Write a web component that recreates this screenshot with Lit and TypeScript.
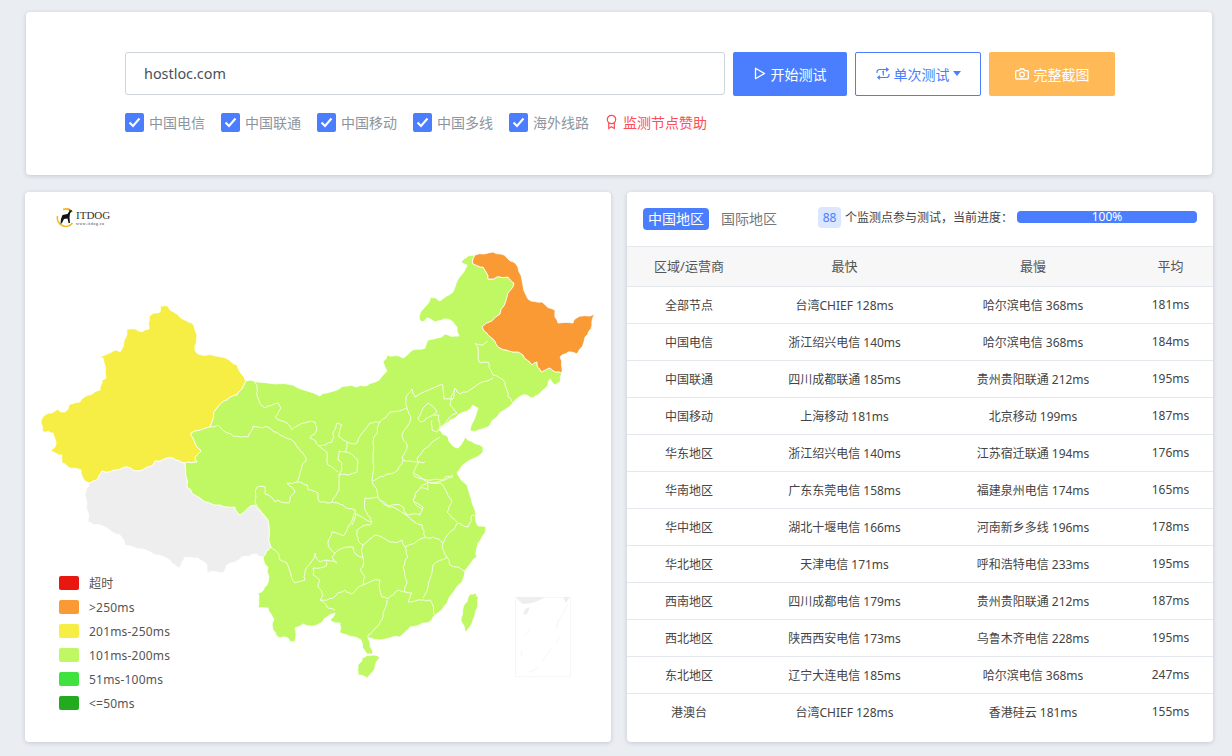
import { LitElement, html, css, svg } from 'lit';
import { customElement, state } from 'lit/decorators.js';

// Map shapes use page coordinates, the svg viewBox lines them up with the card.
const XINJIANG = '160,306 168,306 170,310 185,320 192,323 197,335 195,350 198,354 222,357 237,365 246,381 243,387 237,395 227,400 217,408 210,427 191,433 195,443 201,451 195,457 197,462 185,463 173,458 155,461 152,466 137,471 125,467 118,470 102,471 97,480 89,483 83,478 81,470 68,467 62,463 62,455 50,450 55,447 53,433 43,432 41,423 45,415 58,409 61,412 65,412 70,404 80,402 83,398 100,390 102,380 106,378 103,358 99,357 115,350 120,352 127,329 142,332 149,329 149,317 160,312';
const TIBET = '89,483 97,480 102,471 118,470 125,467 137,471 152,466 155,461 173,458 185,463 187,487 200,498 220,505 235,507 240,515 255,505 268,520 271,547 263,557 255,554 242,557 227,565 223,573 208,573 207,565 198,558 185,557 180,568 170,560 150,552 125,545 120,535 100,525 88,522 85,495';
const HEILONGJIANG = '475,255 493,252 507,258 515,263 522,280 528,299 542,302 555,310 558,323 573,323 575,319 595,314 592,325 585,337 577,354 568,352 560,357 562,373 550,368 541,372 537,362 532,365 523,355 513,352 500,348 493,339 488,335 482,327 500,314 507,297 514,283 508,277 488,279 483,267 473,264';
const MAINLAND = '246,381 257,382 293,385 320,396 330,392 347,386 365,386 375,382 387,371 383,362 387,355 403,358 410,352 425,348 428,340 445,334 459,336 457,327 447,319 435,322 427,318 422,322 419,318 431,297 440,301 453,292 463,273 467,265 461,262 468,256 475,255 473,264 483,267 488,279 508,277 514,283 507,297 500,314 482,327 488,335 493,339 500,348 513,352 523,355 532,365 537,362 541,372 550,368 562,373 560,382 555,385 550,379 543,390 533,398 523,395 513,403 497,417 488,427 470,431 478,408 473,405 458,415 443,425 439,430 448,437 452,445 458,448 465,437 468,440 483,447 483,452 470,460 457,473 467,485 475,510 478,526 486,527 485,533 478,543 477,557 467,568 462,582 447,603 435,615 427,623 410,627 400,637 380,640 368,638 373,654 367,654 361,640 340,633 340,623 330,620 335,613 327,617 317,625 303,624 295,628 295,642 290,642 288,638 280,638 273,630 274,620 268,608 258,608 258,593 267,585 268,567 263,557 271,547 268,520 255,505 240,515 235,507 220,505 200,498 187,487 185,463 197,462 195,457 201,451 195,443 191,433 210,427 217,408 227,400 237,395 243,387';
const HAINAN = '380,657 372,655 362,658 358,665 358,675 367,678 375,668';
const TAIWAN = '476,593 470,594 463,608 461,621 466,633 473,620 478,603';

const BORDERS = [
  '255,382 258,398 265,408 278,403 281,408 275,417 287,423 292,430 297,426 315,422 317,428 310,438 319,446 332,442 333,432 337,423 342,425 339,437 347,442 357,443 370,423 380,422 390,412 407,408 406,397 412,389 415,397 442,384 444,399 453,399 455,388 460,394 473,388 493,378',
  '493,375 492,373 488,362 480,363 478,348 475,343 483,345 488,341',
  '493,375 500,378 505,383 508,397 513,403',
  '455,388 450,405 457,413 440,428',
  '418,418 423,408 428,403 437,412 433,415 425,420 421,422 418,418',
  '433,415 439,415 440,427 437,432 432,430 432,420',
  '407,408 411,418 402,435 407,445 402,457 403,460 417,462 425,462',
  '440,437 432,442 417,458 418,464 413,473 428,482 438,482 453,477',
  '403,460 398,470 387,474 373,481',
  '380,422 373,443 373,462 372,480 378,497 365,498 367,513 372,522 370,525 357,530 358,540 363,545',
  '378,497 385,505 403,507 407,515 420,515 423,507 413,500 420,488 428,490 428,482',
  '347,442 345,452 357,459 357,472 348,475 339,475 342,463 338,460 339,451 345,452',
  '339,475 339,490 332,502 343,505 355,510 355,518 352,525',
  '319,446 327,453 328,465 338,472',
  '210,427 218,425 228,433 240,437 248,437 253,426 262,428 268,427 280,435 295,443 303,453 306,461 300,472 297,482 287,483 295,492 290,497 289,503 278,500 275,502 265,494 265,487 257,487 255,502 268,520',
  '297,482 307,485 308,490 318,493 320,502 328,503 332,502',
  '271,547 275,550 280,560 287,563 295,583 305,580 307,567 315,553 320,562 327,560 327,565 313,568 313,575 320,580 318,587 323,595 320,600 327,607 335,610',
  '327,560 337,563 332,557 335,553 347,547 353,547 357,555 363,557',
  '335,553 328,543 332,532 343,536 353,518 355,513 372,522',
  '363,545 375,535 390,542 402,540 405,547 423,538 433,537 443,543',
  '425,537 422,525 403,513 388,507 380,500',
  '363,545 363,567 360,570 365,577 363,585 380,580 382,597 388,599 398,590 405,592 412,593 408,602 422,600 430,600 434,615',
  '405,547 408,557 403,567 407,582 405,592',
  '320,600 333,598 345,590 352,594 363,585',
  '387,600 383,617 377,627 368,635 368,638',
  '423,598 433,565 447,557 443,543',
  '447,557 450,565 457,567 465,571',
  '443,543 457,523 468,527 472,515 477,517',
  '457,522 447,512 452,502 447,493 440,483 428,482 420,488 413,500 423,510',
  '413,475 427,480 443,480 453,475',
];

const LEGEND = [
  ['#e81710', '超时'],
  ['#f99a35', '>250ms'],
  ['#f7ee45', '201ms-250ms'],
  ['#c0f864', '101ms-200ms'],
  ['#40e240', '51ms-100ms'],
  ['#22ab1e', '<=50ms'],
];

const ROWS = [
  ['全部节点', '台湾CHIEF 128ms', '哈尔滨电信 368ms', '181ms'],
  ['中国电信', '浙江绍兴电信 140ms', '哈尔滨电信 368ms', '184ms'],
  ['中国联通', '四川成都联通 185ms', '贵州贵阳联通 212ms', '195ms'],
  ['中国移动', '上海移动 181ms', '北京移动 199ms', '187ms'],
  ['华东地区', '浙江绍兴电信 140ms', '江苏宿迁联通 194ms', '176ms'],
  ['华南地区', '广东东莞电信 158ms', '福建泉州电信 174ms', '165ms'],
  ['华中地区', '湖北十堰电信 166ms', '河南新乡多线 196ms', '178ms'],
  ['华北地区', '天津电信 171ms', '呼和浩特电信 233ms', '195ms'],
  ['西南地区', '四川成都电信 179ms', '贵州贵阳联通 212ms', '187ms'],
  ['西北地区', '陕西西安电信 173ms', '乌鲁木齐电信 228ms', '195ms'],
  ['东北地区', '辽宁大连电信 185ms', '哈尔滨电信 368ms', '247ms'],
  ['港澳台', '台湾CHIEF 128ms', '香港硅云 181ms', '155ms'],
];

const LINES = ['中国电信', '中国联通', '中国移动', '中国多线', '海外线路'];

type Pt = [number, number];

// Roughens a segment so the borders look hand drawn. The offset only depends on the
// two end points, so an edge shared by two shapes stays shared.
function rough(a: Pt, b: Pt, depth: number): Pt[] {
  const len = Math.hypot(b[0] - a[0], b[1] - a[1]);
  if (depth === 0 || len < 4) return [b];
  const swap = a[0] > b[0] || (a[0] === b[0] && a[1] > b[1]);
  const [p, q] = swap ? [b, a] : [a, b];
  const seed = Math.sin(p[0] * 12.9898 + p[1] * 78.233 + q[0] * 37.719 + q[1] * 9.151) * 43758.5453;
  const amount = ((seed - Math.floor(seed)) * 2 - 1) * Math.min(1.7, len * 0.14);
  const mid: Pt = [
    (p[0] + q[0]) / 2 - ((q[1] - p[1]) / len) * amount,
    (p[1] + q[1]) / 2 + ((q[0] - p[0]) / len) * amount,
  ];
  return [...rough(a, mid, depth - 1), ...rough(mid, b, depth - 1)];
}

function jag(points: string, closed = false): string {
  const pts = points.split(' ').map((s) => s.split(',').map(Number) as Pt);
  if (closed) pts.push(pts[0]);
  const out: Pt[] = [pts[0]];
  for (let i = 1; i < pts.length; i++) out.push(...rough(pts[i - 1], pts[i], 2));
  return out.map((p) => `${p[0].toFixed(1)},${p[1].toFixed(1)}`).join(' ');
}

@customElement('app-root')
export class AppRoot extends LitElement {
  @state() host = 'hostloc.com';

  static styles = css`
    :host {
      display: block;
      box-sizing: border-box;
      height: 756px;
      overflow: hidden;
      padding: 12px 19px 0 25px;
      background: #eaedf2;
      font-family: 'Noto Sans', 'Noto Sans CJK SC', sans-serif;
      color: #444;
    }
    .card {
      background: #fff;
      border-radius: 4px;
      box-shadow: 0 1px 4px rgba(60, 70, 90, 0.22);
    }
    .top {
      height: 163px;
      box-sizing: border-box;
      margin: 0 1px;
      padding: 40px 0 0 99px;
    }
    .search {
      display: flex;
      gap: 8px;
    }
    .input {
      width: 600px;
      height: 43px;
      box-sizing: border-box;
      padding: 0 18px;
      border: 1px solid #ced4da;
      border-radius: 3px;
      font: inherit;
      font-size: 14.4px;
      color: #495057;
      outline: none;
    }
    .btn {
      height: 44px;
      box-sizing: border-box;
      padding-bottom: 1px;
      display: flex;
      align-items: center;
      justify-content: center;
      gap: 5px;
      border-radius: 2px;
      font-size: 14px;
      color: #fff;
    }
    .btn svg {
      flex: none;
    }
    .start {
      width: 114px;
      background: #4a7eff;
    }
    .single {
      width: 126px;
      gap: 4px;
      background: #fff;
      border: 1px solid #4a7eff;
      color: #4a7eff;
    }
    .shot {
      width: 126px;
      background: #ffb957;
    }
    .caret {
      width: 0;
      height: 0;
      margin-left: -1px;
      border: 4.5px solid transparent;
      border-top: 5px solid #4a7eff;
      border-bottom: 0;
    }
    .options {
      display: flex;
      align-items: center;
      margin-top: 16px;
      height: 20px;
      font-size: 14px;
      color: #8d969e;
    }
    .option {
      display: flex;
      align-items: center;
      gap: 5px;
      width: 96px;
    }
    .check {
      width: 19px;
      height: 19px;
      border-radius: 2px;
      background: #4a7eff;
      display: flex;
      align-items: center;
      justify-content: center;
    }
    .sponsor {
      display: flex;
      align-items: center;
      gap: 5px;
      color: #ff4d55;
    }
    .panels {
      display: grid;
      grid-template-columns: 586px 586px;
      gap: 16px;
      margin-top: 17px;
    }
    .map {
      position: relative;
      height: 550px;
      overflow: hidden;
    }
    .map > svg {
      position: absolute;
      inset: 0;
    }
    .logo {
      position: absolute;
      left: 51px;
      top: 18px;
      width: 36px;
      font-family: 'Liberation Serif', serif;
      color: #333;
    }
    .logo b {
      display: block;
      font-size: 11px;
      line-height: 11px;
      font-weight: 400;
    }
    .logo small {
      display: block;
      font-size: 4px;
      line-height: 5px;
      letter-spacing: 0.5px;
      white-space: nowrap;
    }
    .legend {
      position: absolute;
      left: 34px;
      top: 384px;
      display: grid;
      gap: 10px;
      font-size: 12px;
      letter-spacing: 0.2px;
      color: #555;
    }
    .legend div {
      display: flex;
      align-items: center;
      gap: 10px;
      height: 14px;
      white-space: nowrap;
    }
    .legend i {
      width: 20px;
      height: 14px;
      border-radius: 2px;
    }
    .head {
      height: 55px;
      box-sizing: border-box;
      display: flex;
      align-items: center;
      padding: 0 16px 1px;
      border-bottom: 1px solid #e4e7ec;
    }
    .tab {
      height: 22px;
      line-height: 22px;
      padding: 0 5px;
      font-size: 14px;
      border-radius: 4px;
      color: #777;
    }
    .tab.on {
      background: #4a7eff;
      color: #fff;
      margin-right: 12px;
    }
    .tab + .tab {
      padding: 0;
      width: 56px;
    }
    .count {
      width: 23px;
      height: 21px;
      margin: -3px 0 0 41px;
      border-radius: 4px;
      background: #dbe6ff;
      color: #4a7eff;
      font-size: 12px;
      line-height: 21px;
      text-align: center;
    }
    .note {
      margin: -3px 0 0 4px;
      width: 172px;
      font-size: 12px;
      white-space: nowrap;
    }
    .bar {
      width: 180px;
      height: 12px;
      margin-top: -3px;
      background: #e9ecef;
      border-radius: 4px;
    }
    .fill {
      height: 100%;
      background: #4a7eff;
      border-radius: 4px;
      color: #fff;
      font-size: 12px;
      line-height: 12px;
      text-align: center;
    }
    table {
      width: 586px;
      table-layout: fixed;
      border-collapse: collapse;
      font-size: 12px;
    }
    th {
      height: 39px;
      padding: 0 0 2px;
      box-sizing: border-box;
      background: #f7f7f7;
      font-size: 13px;
      font-weight: 400;
      color: #555;
    }
    td {
      height: 36px;
      padding: 0;
      text-align: center;
      border-top: 1px solid #e4e7ec;
    }
  `;

  private mapSvg() {
    const shape = (points: string, fill: string) =>
      svg`<polygon points=${jag(points, true)} fill=${fill} stroke="#fff" stroke-width="0.8" />`;
    return html`<svg width="586" height="550" viewBox="25 192 586 550">
      ${svg`
        ${shape(XINJIANG, '#f7ee45')}
        ${shape(TIBET, '#eeeeee')}
        ${shape(MAINLAND, '#c0f864')}
        ${shape(HEILONGJIANG, '#f99a35')}
        ${shape(HAINAN, '#c0f864')}
        ${shape(TAIWAN, '#c0f864')}
        ${BORDERS.map((p) => svg`<polyline points=${jag(p)} fill="none" stroke="#f6fce8" stroke-width="1" stroke-linejoin="round" />`)}
        <rect x="515.5" y="597.5" width="55" height="79" fill="#fff" stroke="#f6f6f6" />
        <path d="M516 597h29c-6 4-14 7-22 7-3-2-5-4-7-7zM563 597h7l-4 6zM525 609l5-2-3 7-4 1z" fill="#eeeeee" />
        <path d="M568 604l-12 22M558 620l-1 8M530 629l-6 7M560 636l-4 7M521 650l1 6M551 648l-8 13M538 668l-9 4" stroke="#f6f6f6" fill="none" />
        <path d="M63 209.500a8.500 8.500 0 0 1 9.500 2.500M57.500 216a8.500 8.500 0 0 0 15 7" stroke="#f5b81c" stroke-width="1.600" fill="none" />
        <path d="M60.500 224l.5-5 1.500-4 5-1 2-3-1-2.500 1.500 2 1.500-.5.5 1-2 2.500-.5 4 .5 5.500h-1.500l-1-4.500-3.500.5-2 4z" fill="#111" />
      `}
    </svg>`;
  }

  render() {
    return html`
      <section class="card top">
        <div class="search">
          <input class="input" .value=${this.host} />
          <div class="btn start">
            <svg width="12" height="13" viewBox="0 0 12 13"><path d="M1.500 1.300v10.400L10.500 6.500z" fill="none" stroke="#fff" stroke-width="1.300" stroke-linejoin="round" /></svg>
            开始测试
          </div>
          <div class="btn single">
            <svg width="14" height="13" viewBox="0 0 14 13" fill="none" stroke="#4a7eff" stroke-width="1.200"><path d="M1 6V5a2.500 2.500 0 0 1 2.500-2.500H12M10 .7l2.200 1.800L10 4.300M13 7v1a2.500 2.500 0 0 1-2.500 2.500H2M4 8.700L1.800 10.500 4 12.300" /><path d="M6.300 5.200l1-.7v4" /></svg>
            单次测试
            <span class="caret"></span>
          </div>
          <div class="btn shot">
            <svg width="14" height="12" viewBox="0 0 14 12" fill="none" stroke="#fff" stroke-width="1.300"><path d="M1.700 2.700h2.600l1-1.700h3.400l1 1.700h2.600a1 1 0 0 1 1 1v6.300a1 1 0 0 1-1 1H1.700a1 1 0 0 1-1-1V3.700a1 1 0 0 1 1-1z" /><circle cx="7" cy="6.500" r="2.400" /></svg>
            完整截图
          </div>
        </div>
        <div class="options">
          ${LINES.map(
            (name) => html`<label class="option">
              <span class="check"><svg width="13" height="11" viewBox="0 0 13 11"><path d="M1.500 5.500l3.500 3.500 6.500-7.500" fill="none" stroke="#fff" stroke-width="2" /></svg></span>
              ${name}
            </label>`,
          )}
          <div class="sponsor">
            <svg width="13" height="16" viewBox="0 0 13 16" fill="none" stroke="#ff4d55" stroke-width="1.200"><circle cx="6.500" cy="5.500" r="4.200" /><path d="M3.700 9v5.500l2.800-1.700 2.800 1.700V9" /></svg>
            监测节点赞助
          </div>
        </div>
      </section>
      <div class="panels">
        <section class="card map">
          ${this.mapSvg()}
          <div class="logo"><b>ITDOG</b><small>www.itdog.cn</small></div>
          <div class="legend">
            ${LEGEND.map(([color, label]) => html`<div><i style="background:${color}"></i>${label}</div>`)}
          </div>
        </section>
        <section class="card">
          <div class="head">
            <span class="tab on">中国地区</span>
            <span class="tab">国际地区</span>
            <span class="count">88</span>
            <span class="note">个监测点参与测试，当前进度：</span>
            <div class="bar"><div class="fill" style="width:100%">100%</div></div>
          </div>
          <table>
            <colgroup>
              <col style="width:124px" /><col style="width:187px" /><col style="width:190px" /><col style="width:85px" />
            </colgroup>
            <thead>
              <tr><th>区域/运营商</th><th>最快</th><th>最慢</th><th>平均</th></tr>
            </thead>
            <tbody>
              ${ROWS.map((r) => html`<tr>${r.map((c) => html`<td>${c}</td>`)}</tr>`)}
            </tbody>
          </table>
        </section>
      </div>
    `;
  }
}
